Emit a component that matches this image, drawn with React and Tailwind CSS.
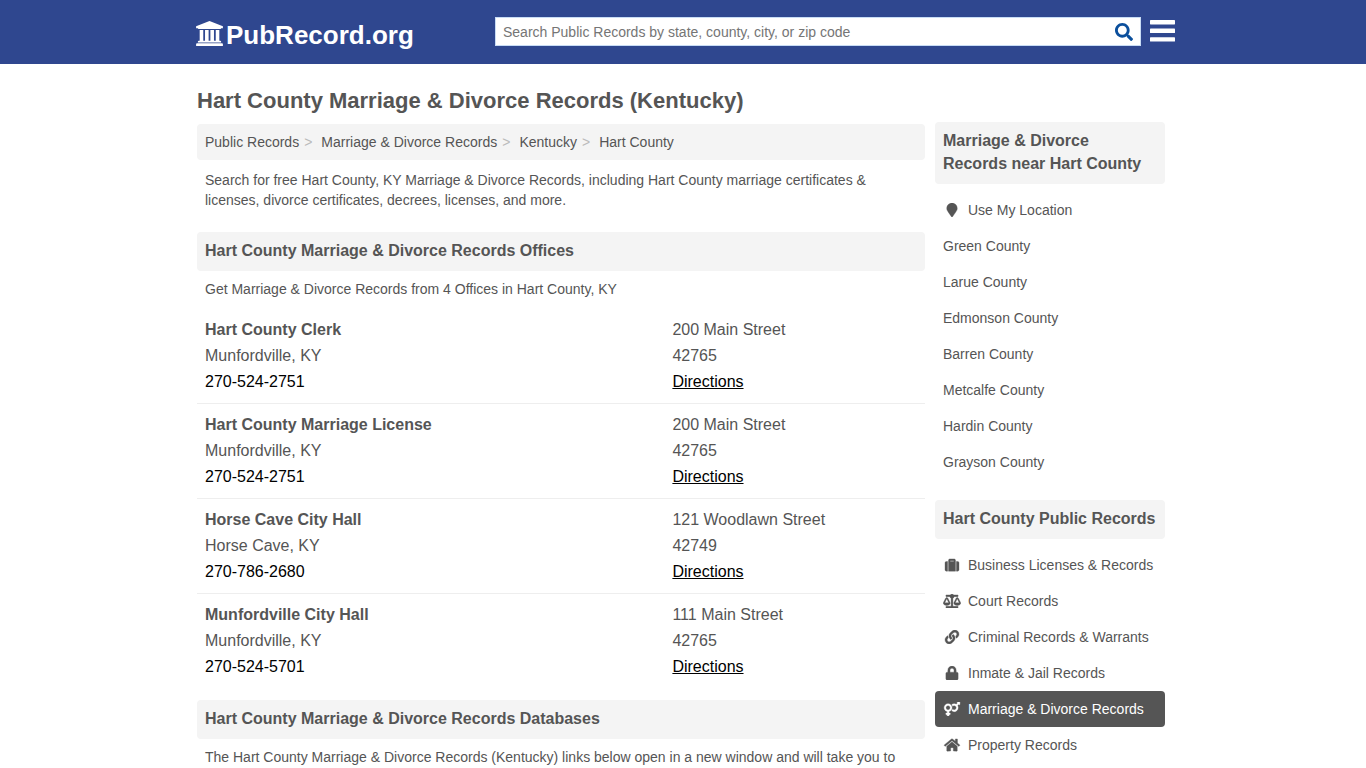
import React from 'react';
import {
  FaSearch, FaMapMarker, FaSuitcase, FaBalanceScale,
  FaLink, FaLock, FaVenusMars, FaHome,
} from 'react-icons/fa';

const CRUMBS = ['Public Records', 'Marriage & Divorce Records', 'Kentucky', 'Hart County'];

const OFFICES = [
  { name: 'Hart County Clerk', city: 'Munfordville, KY', phone: '270-524-2751', street: '200 Main Street', zip: '42765' },
  { name: 'Hart County Marriage License', city: 'Munfordville, KY', phone: '270-524-2751', street: '200 Main Street', zip: '42765' },
  { name: 'Horse Cave City Hall', city: 'Horse Cave, KY', phone: '270-786-2680', street: '121 Woodlawn Street', zip: '42749' },
  { name: 'Munfordville City Hall', city: 'Munfordville, KY', phone: '270-524-5701', street: '111 Main Street', zip: '42765' },
];

const NEARBY = ['Green County', 'Larue County', 'Edmonson County', 'Barren County', 'Metcalfe County', 'Hardin County', 'Grayson County'];

const RECORDS = [
  { label: 'Business Licenses & Records', icon: FaSuitcase },
  { label: 'Court Records', icon: FaBalanceScale },
  { label: 'Criminal Records & Warrants', icon: FaLink },
  { label: 'Inmate & Jail Records', icon: FaLock },
  { label: 'Marriage & Divorce Records', icon: FaVenusMars, active: true },
  { label: 'Property Records', icon: FaHome },
];

// Courthouse with four columns
function LogoIcon() {
  return (
    <svg viewBox="0 128 1920 1792" fill="currentColor" className="w-[27px] h-[25px] mt-[3px]">
      <path d="M960 128l960 384v128h-128q0 26-20.5 45t-48.5 19h-1526q-28 0-48.5-19t-20.5-45h-128v-128zM256 768h256v768h128v-768h256v768h128v-768h256v768h128v-768h256v768h59q28 0 48.5 19t20.5 45v64h-1664v-64q0-26 20.5-45t48.5-19h59v-768zM1851 1728q28 0 48.5 19t20.5 45v128h-1920v-128q0-26 20.5-45t48.5-19h1782z" />
    </svg>
  );
}

function MenuIcon() {
  return (
    <svg viewBox="0 0 25 22" fill="currentColor" className="w-[25px] h-[22px]">
      <rect y="0" width="25" height="4.4" rx="0.6" />
      <rect y="8.6" width="25" height="4.4" rx="0.6" />
      <rect y="17.2" width="25" height="4.4" rx="0.6" />
    </svg>
  );
}

function SectionTitle({ children }) {
  return (
    <h2 className="bg-[#f4f4f4] rounded px-2 pt-[7px] pb-[9px] text-base leading-[23px] font-bold">{children}</h2>
  );
}

function SideLink({ icon: Icon, label, active }) {
  return (
    <li>
      <a
        href="#"
        className={`flex items-center h-9 px-2 rounded text-sm whitespace-nowrap ${
          active ? 'bg-[#555] text-white' : 'text-[#555]'
        }`}
      >
        {Icon && <Icon className="w-[18px] h-[14px] mr-[7px] flex-shrink-0 stroke-[12]" />}
        {label}
      </a>
    </li>
  );
}

function Header() {
  return (
    <header className="bg-[#2f478f] h-16">
      <div className="w-[980px] ml-[195px] h-full flex items-center">
        <a href="#" className="flex items-center w-[300px] pl-[1px] text-white">
          <LogoIcon />
          <span className="ml-[3px] mt-[5px] text-[26px] leading-8 font-bold">PubRecord.org</span>
        </a>
        <form className="w-[646px] h-[29px] bg-white border border-[#c8dcf5] flex items-center mb-[1px]">
          <input
            type="text"
            placeholder="Search Public Records by state, county, city, or zip code"
            className="flex-1 pl-[7px] text-sm outline-none text-[#555] placeholder:text-[#757575]"
          />
          <button type="button" className="mr-[7px] text-[#0b4f9c]">
            <FaSearch className="size-[18px]" />
          </button>
        </form>
        <button type="button" aria-label="Menu" className="ml-[9px] mb-[2px] text-white">
          <MenuIcon />
        </button>
      </div>
    </header>
  );
}

export default function App() {
  return (
    <div className="h-screen overflow-hidden bg-white text-[#555] font-['Liberation_Sans',Arial,sans-serif]">
      <Header />

      <div className="w-[968px] ml-[197px] flex gap-[10px]">
        <main className="w-[728px]">
          <h1 className="mt-[21px] mb-[7px] text-[22px] leading-8 font-bold">
            Hart County Marriage &amp; Divorce Records (Kentucky)
          </h1>

          <ol className="flex items-center h-9 px-2 bg-[#f4f4f4] rounded text-sm">
            {CRUMBS.map((crumb, i) => (
              <li key={crumb} className="flex">
                <a href="#">{crumb}</a>
                {i < CRUMBS.length - 1 && <span className="ml-[5px] mr-[9px] text-[#bbb]">&gt;</span>}
              </li>
            ))}
          </ol>

          <p className="px-2 mt-[10px] mb-[22px] text-sm leading-5">
            Search for free Hart County, KY Marriage &amp; Divorce Records, including Hart County marriage certificates &amp; licenses, divorce certificates, decrees, licenses, and more.
          </p>

          <SectionTitle>Hart County Marriage &amp; Divorce Records Offices</SectionTitle>
          <p className="px-2 mt-2 mb-[10px] text-sm leading-5">
            Get Marriage &amp; Divorce Records from 4 Offices in Hart County, KY
          </p>

          <ul className="mb-3">
            {OFFICES.map(office => (
              <li
                key={office.name}
                className="flex p-2 text-base leading-[26px] border-b border-[#eee] last:border-b-0"
              >
                <div className="w-[467.4px]">
                  <h3 className="font-bold">{office.name}</h3>
                  <div>{office.city}</div>
                  <a href="#" className="block text-black">{office.phone}</a>
                </div>
                <div>
                  <div>{office.street}</div>
                  <div>{office.zip}</div>
                  <a href="#" className="block text-black underline">Directions</a>
                </div>
              </li>
            ))}
          </ul>

          <SectionTitle>Hart County Marriage &amp; Divorce Records Databases</SectionTitle>
          <p className="px-2 mt-2 text-sm leading-5">
            The Hart County Marriage &amp; Divorce Records (Kentucky) links below open in a new window and will take you to
          </p>
        </main>

        <aside className="w-[230px] mt-[58px]">
          <SectionTitle>Marriage &amp; Divorce Records near Hart County</SectionTitle>
          <ul className="mt-2 mb-5">
            <SideLink icon={FaMapMarker} label="Use My Location" />
            {NEARBY.map(county => <SideLink key={county} label={county} />)}
          </ul>

          <SectionTitle>Hart County Public Records</SectionTitle>
          <ul className="mt-2">
            {RECORDS.map(record => <SideLink key={record.label} {...record} />)}
          </ul>
        </aside>
      </div>
    </div>
  );
}
